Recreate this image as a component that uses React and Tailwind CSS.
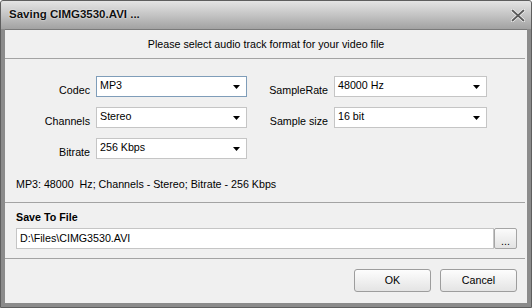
import { useState } from 'react'

const font = { fontFamily: '"Liberation Sans", Arial, sans-serif' }

function Combo({ value, focused, width }) {
  return (
    <div
      className={`flex items-center h-[21px] bg-white border pl-[3px] pr-[6px] ${
        focused ? 'border-[#7f9db9]' : 'border-[#c5c5c5]'
      } ${width}`}
    >
      <span className="flex-1 text-[10.7px] leading-none text-black -mt-[2px]">{value}</span>
      <svg width="7" height="4" viewBox="0 0 7 4" className="mt-[1px]">
        <path d="M0 0h7L3.5 4z" fill="#000" />
      </svg>
    </div>
  )
}

function Row({ label, children, labelWidth }) {
  return (
    <div className="flex items-end h-[21px]">
      <span className={`${labelWidth} text-right text-[10.7px] leading-none text-black pr-[6px] pb-[1px]`}>
        {label}
      </span>
      {children}
    </div>
  )
}

function Button({ children }) {
  return (
    <button className="w-[77px] h-[23px] rounded-[3px] border border-[#9d9d9d] bg-gradient-to-b from-[#fdfdfd] to-[#e4e4e4] text-[10.7px] text-black">
      {children}
    </button>
  )
}

export default function App() {
  const [path] = useState('D:\\Files\\CIMG3530.AVI')

  return (
    <div
      style={font}
      className="w-[532px] h-[308px] flex flex-col bg-[#8b8b8b] border border-[#5e5e5e] rounded-t-[3px] overflow-hidden"
    >
      {/* Title bar */}
      <div className="h-[28px] flex items-center justify-between pl-[8px] pr-[6px] bg-gradient-to-b from-[#e4e4e4] via-[#c4c4c4] to-[#a2a2a2]">
        <span className="text-[11.5px] font-bold text-[#111] [text-shadow:0_0_2px_#ffffff]">
          Saving CIMG3530.AVI ...
        </span>
        <svg width="14" height="13" viewBox="0 0 14 13">
          <path d="M1.5 1.5l11 10M12.5 1.5l-11 10" stroke="#f4f4f4" strokeWidth="3.2" strokeLinecap="round" />
          <path d="M1.5 1.5l11 10M12.5 1.5l-11 10" stroke="#5a5a5a" strokeWidth="1.8" strokeLinecap="round" />
        </svg>
      </div>

      {/* Body */}
      <div className="flex-1 mx-[4px] mb-[4px] bg-[#f0f0f0] border-t border-[#7a7a7a] flex flex-col">
        <div className="h-[28px] flex items-center justify-center text-[10.7px] text-black">
          Please select audio track format for your video file
        </div>
        <div className="h-px bg-[#a3a3a3] mr-[2px]" />

        <div className="flex mt-[17px]">
          <div className="flex flex-col gap-[10px]">
            <Row label="Codec" labelWidth="w-[91px]">
              <Combo value="MP3" focused width="w-[151px]" />
            </Row>
            <Row label="Channels" labelWidth="w-[91px]">
              <Combo value="Stereo" width="w-[151px]" />
            </Row>
            <Row label="Bitrate" labelWidth="w-[91px]">
              <Combo value="256 Kbps" width="w-[151px]" />
            </Row>
          </div>
          <div className="flex flex-col gap-[10px]">
            <Row label="SampleRate" labelWidth="w-[87px]">
              <Combo value="48000 Hz" width="w-[153px]" />
            </Row>
            <Row label="Sample size" labelWidth="w-[87px]">
              <Combo value="16 bit" width="w-[153px]" />
            </Row>
          </div>
        </div>

        <div className="mt-[18px] h-[14px] pl-[11px] text-[10.7px] leading-[14px] text-black whitespace-pre">
          MP3: 48000  Hz; Channels - Stereo; Bitrate - 256 Kbps
        </div>
        <div className="h-px bg-[#a3a3a3] mt-[11px] mr-[2px]" />

        <div className="mt-[7px] h-[14px] pl-[11px] text-[10.7px] leading-[14px] font-bold text-black">
          Save To File
        </div>
        <div className="flex mt-[4px] ml-[11px] mr-[10px] h-[21px]">
          <div className="flex-1 flex items-center bg-white border border-[#c5c5c5] pl-[3px] text-[10.7px] text-black">
            {path}
          </div>
          <button className="w-[23px] h-[21px] rounded-[2px] border border-[#a5a5a5] bg-gradient-to-b from-[#fbfbfb] to-[#e3e3e3] text-[10.7px] leading-[24px] text-black">
            ...
          </button>
        </div>
        <div className="h-px bg-[#a3a3a3] mt-[9px] mr-[2px]" />

        <div className="flex justify-end gap-[9px] mt-[10px] mr-[10px]">
          <Button>OK</Button>
          <Button>Cancel</Button>
        </div>
      </div>
    </div>
  )
}
